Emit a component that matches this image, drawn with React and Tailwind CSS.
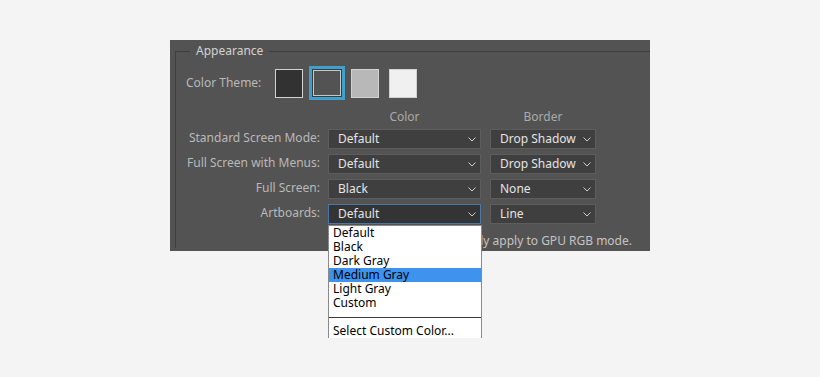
import React from 'react';

const rows = [
  { label: 'Standard Screen Mode:', color: 'Default', border: 'Drop Shadow' },
  { label: 'Full Screen with Menus:', color: 'Default', border: 'Drop Shadow' },
  { label: 'Full Screen:', color: 'Black', border: 'None' },
  { label: 'Artboards:', color: 'Default', border: 'Line', open: true },
];

const options = ['Default', 'Black', 'Dark Gray', 'Medium Gray', 'Light Gray', 'Custom'];

function Chevron() {
  return (
    <svg width="8" height="5" viewBox="0 0 8 5" className="shrink-0">
      <path d="M0.5 0.5 L4 4 L7.5 0.5" fill="none" stroke="#cfcfcf" strokeWidth="1" />
    </svg>
  );
}

function Dropdown({ value, active }) {
  return (
    <div
      className={
        'h-[20px] flex items-center justify-between pl-[9px] pr-[4px] border text-[#e4e4e4] ' +
        (active ? 'bg-[#343434] border-[#4a78a6]' : 'bg-[#3f3f3f] border-[#5d5d5d]')
      }
    >
      <span>{value}</span>
      <Chevron />
    </div>
  );
}

function Swatch({ color }) {
  return <div className={'w-[28px] h-[29px] border border-[#d2d2d2] ' + color} />;
}

export default function App() {
  return (
    <div className="w-[820px] h-[377px] bg-[#f4f4f4] pt-[40px] pl-[170px] font-['Noto_Sans','Liberation_Sans',sans-serif] text-[12px] leading-[16px]">
      <div className="w-[480px] h-[211px] bg-[#535353] pt-[3px] pl-[5px]">
        <fieldset className="border-t border-l border-[#3d3d3d] h-[205px]">
          <legend className="ml-[14px] px-[6px] text-[#d2d2d2]">Appearance</legend>

          {/* Color theme */}
          <div className="flex items-center mt-[7px] pl-[10px] h-[34px]">
            <span className="w-[89px] text-[#b9b9b9]">Color Theme:</span>
            <div className="flex items-center gap-[6px]">
              <Swatch color="bg-[#323232]" />
              <div className="border-[3px] border-[#3ea1cb] p-px bg-[#3a3a3a]">
                <div className="w-[28px] h-[26px] border border-[#c8c8c8] bg-[#535353]" />
              </div>
              <Swatch color="bg-[#b8b8b8]" />
              <div className="ml-[4px]">
                <Swatch color="bg-[#f0f0f0]" />
              </div>
            </div>
          </div>

          <div className="grid grid-cols-[144px_153px_107px] gap-x-[8px] gap-y-[5px] mt-[9px]">
            <div />
            <div className="text-center text-[#aaaaaa] -mb-[1px]">Color</div>
            <div className="text-center text-[#aaaaaa] ml-[1px] -mb-[1px]">Border</div>
            {rows.map((r) => (
              <React.Fragment key={r.label}>
                <div className="text-right text-[#b9b9b9] leading-[20px] -mt-[1px]">{r.label}</div>
                <div className="relative">
                  <Dropdown value={r.color} active={r.open} />
                  {r.open && (
                    <div className="absolute left-0 top-[21px] w-[154px] h-[113px] bg-white border border-[#8a8a8a] border-b-0 text-black text-[12px] leading-[14px] z-10">
                      {options.map((o) => (
                        <div
                          key={o}
                          className={'pl-[4px] h-[14px] ' + (o === 'Medium Gray' ? 'bg-[#3d93ee]' : '')}
                        >
                          {o}
                        </div>
                      ))}
                      <div className="h-px bg-[#3a3a3a] mt-[7px] mb-[6px]" />
                      <div className="pl-[4px]">Select Custom Color...</div>
                    </div>
                  )}
                </div>
                <div className="ml-[1px]">
                  <Dropdown value={r.border} />
                </div>
              </React.Fragment>
            ))}
          </div>

          <div className="flex justify-end mt-[9px] pr-[18px]">
            <span className="whitespace-nowrap text-[#c4c4c4]">Border settings only apply to GPU RGB mode.</span>
          </div>
        </fieldset>
      </div>
    </div>
  );
}
